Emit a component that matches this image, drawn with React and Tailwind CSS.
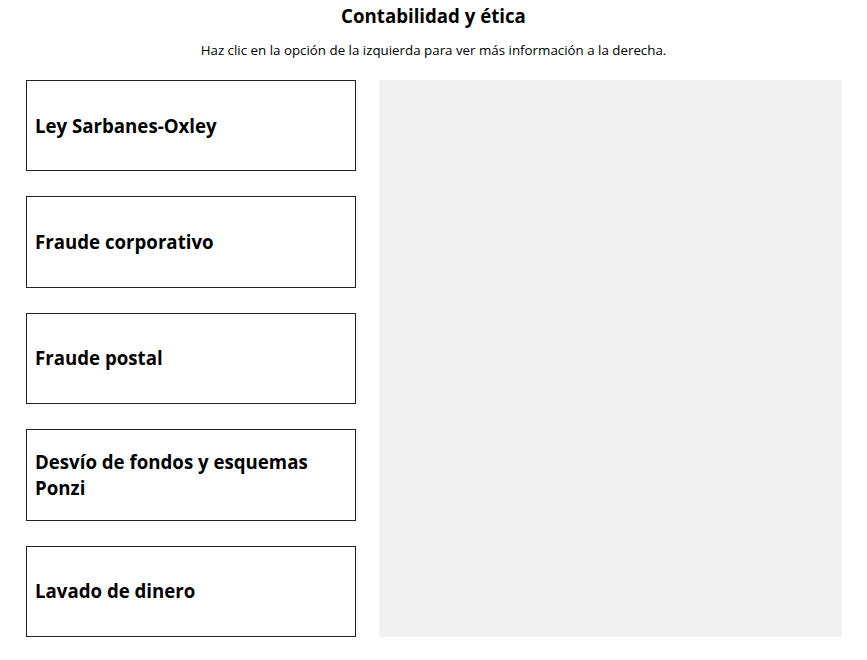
export default function App() {
  const items = [
    "Ley Sarbanes-Oxley",
    "Fraude corporativo",
    "Fraude postal",
    "Desvío de fondos y esquemas Ponzi",
    "Lavado de dinero",
  ];
  return (
    <div className="w-[867px] h-[660px] bg-white text-black" style={{ fontFamily: '"Open Sans", sans-serif' }}>
      <h1 className="pt-[3px] text-center text-[18.67px] font-bold leading-[26px]">Contabilidad y ética</h1>
      <p className="mt-[12px] text-center text-[13.33px] leading-[18px]">
        Haz clic en la opción de la izquierda para ver más información a la derecha.
      </p>
      <div className="mt-[21px] flex pl-[26px] pr-[25px] gap-[23px]">
        <div className="flex w-[330px] flex-col gap-[25.25px]">
          {items.map((t) => (
            <div key={t} className="flex h-[91.2px] items-center border border-[#222] px-[8px] text-[18.67px] font-bold leading-[26px]">
              {t}
            </div>
          ))}
        </div>
        <div className="flex-1 bg-[#f1f1f1]" />
      </div>
    </div>
  );
}
